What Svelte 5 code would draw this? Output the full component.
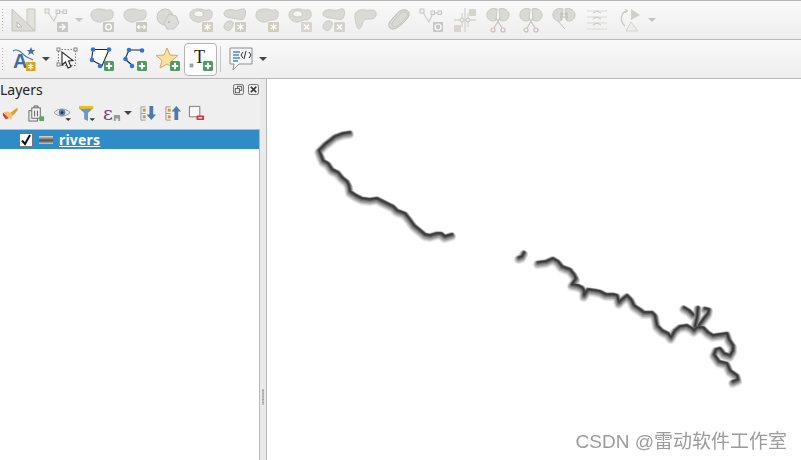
<script>
  const river1 = [[350,133],[343,134],[335,137],[330,141],[326,144],[319,151],[321,156],[323,161],[328,164],[332,170],[338,173],[342,178],[347,182],[349,186],[350,192],[356,196],[362,199],[370,200],[377,199],[385,203],[393,207],[397,211],[405,214],[409,219],[414,226],[419,230],[425,235],[430,236],[437,234],[441,234],[445,237],[452,235]];
  const river2a = [[519,258],[522,257],[524,253]];
  const river2 = [[538,263],[546,262],[553,259],[558,262],[562,267],[570,270],[574,275],[576,279],[572,285],[578,286],[582,288],[584,291],[584,296],[588,290],[595,291],[600,292],[606,295],[613,295],[617,296],[619,303],[622,300],[627,296],[631,300],[634,306],[640,310],[644,313],[652,313],[655,316],[657,326],[662,331],[668,334],[671,338],[675,331],[680,327],[687,326],[692,329],[694,331],[697,328],[703,328],[708,333],[713,336],[720,335],[727,334],[729,340],[733,346],[733,351],[730,356],[724,354],[720,349],[716,350],[714,355],[719,362],[727,364],[730,371],[737,376],[738,380],[733,382]];
  const branch1 = [[684,308],[689,311],[693,315]];
  const branch2 = [[695,327],[697,318],[698,308]];
  const branch3 = [[699,326],[704,319],[708,314],[709,310],[705,309]];
  const rivers = [river1, river2a, river2, branch1, branch2, branch3].map((line) => line.map((p) => p.join(',')).join(' '));

  // outer halo first, dark core last
  const layers = [
    { width: 9.5, color: '#f0f0f0', dx: -0.5, dy: 1.6 },
    { width: 8.4, color: '#dcdcdc', dx: -0.4, dy: 1.3 },
    { width: 7.2, color: '#c0c0c0', dx: -0.3, dy: 1 },
    { width: 5.8, color: '#9c9c9c', dx: -0.2, dy: 0.6 },
    { width: 4.2, color: '#757575', dx: 0, dy: 0 },
    { width: 2.6, color: '#505050', dx: 0, dy: -0.5 },
    { width: 1.2, color: '#383838', dx: 0, dy: -0.8 }
  ];

  const blobA = 'M1 7c0-5 4-6 9-6s6 2 9 1 5 2 4 6-4 4-7 4-4 3-8 2-7-3-7-7z';
  const holed = 'M1 7c0-5 4-6 9-6s6 2 9 1 5 2 4 6-4 4-7 4-4 3-8 2-7-3-7-7zM5 5c-1 2 2 4 5 4s5-1 4-4-8-3-9 0z';
  const twoTop = 'M2 6c0-4 5-5 9-4s5 0 9-1 4 3 3 7-4 4-8 3-13-1-13-5z';
  const twoBot = 'M2 19c0-3 3-7 7-6s2 5 0 8-7 1-7-2z';
</script>

{#snippet blob(d)}
  <path {d} fill="#d9d9d6" stroke="#cacac7" fill-rule="evenodd" />
{/snippet}

{#snippet badge(kind, tint = '#c9c9c4')}
  <rect x="13" y="14" width="11" height="10" rx="1" fill={tint} />
  {#if kind === 'x'}
    <path d="M16 16.500l5 5m0-5l-5 5" stroke="#fff" stroke-width="1.700" />
  {:else if kind === 'gear'}
    <path d="M18.500 15.500v7m-3-5.500l6 4m0-4l-6 4" stroke="#fff" stroke-width="1.100" />
    <circle cx="18.500" cy="19" r="1.500" fill="#fff" />
  {:else if kind === 'rotate'}
    <circle cx="18.500" cy="19" r="2.800" fill="none" stroke="#fff" stroke-width="1.300" />
  {:else if kind === 'resize'}
    <path d="M15 19h7m-5.500-2l-2 2 2 2m4-4l2 2-2 2" fill="none" stroke="#fff" stroke-width="1.200" />
  {/if}
{/snippet}

{#snippet scissors()}
  <path d="M11 1C5-1 0 3 1 8s6 6 9 4zM13 1c5-2 11 2 10 7s-6 6-9 4z" fill="#d9d9d6" stroke="#c8c8c5" />
  <path d="M10 10l6 10M14 10l-6 10" stroke="#c4c4c1" stroke-width="1.300" fill="none" />
  <circle cx="7" cy="22" r="2" fill="none" stroke="#cbbcbc" stroke-width="1.200" />
  <circle cx="17" cy="22" r="2" fill="none" stroke="#cbbcbc" stroke-width="1.200" />
{/snippet}

{#snippet plus()}
  <rect x="14" y="14" width="10" height="10" rx="1.500" fill="#4f9a62" />
  <path d="M19 15.800v6.400M15.800 19h6.400" stroke="#fff" stroke-width="2" />
{/snippet}

{#snippet arrow()}
  <span class="arrow"></span>
{/snippet}

<div class="window">
  <div class="toolbar first">
    <span class="handle"></span>
    <span class="btn"><svg viewBox="0 0 24 24">
      <path d="M0 1l23 22H0z" fill="#dcdbd6" stroke="#c5c3bc" />
      <path d="M5 14l5 5H5z" fill="#f5f5f3" stroke="#bcbab3" />
      <path d="M15 1h8v22l-8-8z" fill="#e3e2dd" stroke="#c9c7c0" />
    </svg></span>
    <span class="btn"><svg viewBox="0 0 24 24">
      <path d="M2 3l7 10 4-9h7" fill="none" stroke="#cfcfcb" stroke-width="1.300" />
      <rect x="0" y="1" width="4" height="4" fill="#eee" stroke="#c6c6c2" />
      <rect x="11" y="2" width="3.500" height="3.500" fill="#eee" stroke="#c6c6c2" />
      <rect x="18" y="2" width="3.500" height="3.500" fill="#eee" stroke="#c6c6c2" />
      <rect x="12" y="14" width="11" height="10" rx="1" fill="#c6c6c2" />
      <path d="M14 19h5m-2-3l3 3-3 3" fill="none" stroke="#fff" stroke-width="1.500" />
    </svg></span>
    <span class="caret-btn">{@render arrow()}</span>
    <span class="btn"><svg viewBox="0 0 24 24">{@render blob(blobA)}{@render badge('rotate')}</svg></span>
    <span class="btn"><svg viewBox="0 0 24 24">{@render blob(blobA)}{@render badge('resize')}</svg></span>
    <span class="btn"><svg viewBox="0 0 24 24">
      <circle cx="9" cy="9" r="8" fill="#d9d9d6" stroke="#c8c8c5" />
      <path d="M13 6l7 2 3 7-5 6h-7l-3-6z" fill="#dcdcd9" stroke="#c4c4c1" />
      <circle cx="13" cy="14" r="1" fill="#b5b5b2" />
    </svg></span>
    <span class="btn"><svg viewBox="0 0 24 24">{@render blob(holed)}{@render badge('gear', '#cfcdc2')}</svg></span>
    <span class="btn"><svg viewBox="0 0 24 24">
      {@render blob(twoTop)}
      {@render blob(twoBot)}
      {@render badge('gear', '#cfcdc2')}
    </svg></span>
    <span class="btn"><svg viewBox="0 0 24 24">{@render blob(blobA)}{@render badge('gear', '#cfcdc2')}</svg></span>
    <span class="btn"><svg viewBox="0 0 24 24">{@render blob(holed)}{@render badge('x', '#d8d2d0')}</svg></span>
    <span class="btn"><svg viewBox="0 0 24 24">
      {@render blob(twoTop)}
      {@render blob(twoBot)}
      {@render badge('x', '#d4d2cf')}
    </svg></span>
    <span class="btn"><svg viewBox="0 0 24 24">
      {@render blob('M1 8c0-5 5-7 10-6s10-2 11 3-3 6-7 6-5 1-6 3-2 7-4 7-4-8-4-13z')}
    </svg></span>
    <span class="btn"><svg viewBox="0 0 24 24">
      <path d="M3 20c-3-3 0-7 3-10s5-7 9-8 8 1 7 5-4 6-7 9-9 7-12 4z" fill="#d9d9d6" stroke="#bdbdb9" />
      <path d="M6 18c-2-2 0-5 3-8s5-6 8-6 4 2 3 4-4 5-6 7-6 5-8 3z" fill="none" stroke="#c6c6c2" />
    </svg></span>
    <span class="btn"><svg viewBox="0 0 24 24">
      <path d="M2 3l7 11 4-9h7" fill="none" stroke="#cfcfcb" stroke-width="1.300" />
      <rect x="0" y="1" width="4" height="4" fill="#eee" stroke="#c6c6c2" />
      <rect x="11" y="3" width="3.500" height="3.500" fill="#eee" stroke="#c6c6c2" />
      <rect x="18" y="3" width="3.500" height="3.500" fill="#eee" stroke="#c6c6c2" />
      <rect x="13" y="14" width="10" height="10" rx="1" fill="#c6c6c2" />
      <circle cx="18" cy="19" r="3" fill="none" stroke="#fff" stroke-width="1.200" />
    </svg></span>
    <span class="btn"><svg viewBox="0 0 24 24">
      <path d="M12 0v24M1 12h22M9 5v14M15 5v14" fill="none" stroke="#d5d5d2" stroke-width="1.300" />
      <circle cx="9" cy="12" r="2" fill="#eee" stroke="#c6c6c2" />
      <circle cx="15" cy="12" r="2" fill="#eee" stroke="#c6c6c2" />
      <rect x="16" y="1" width="7" height="7" rx="1" fill="#d4d4c8" />
      <rect x="1" y="17" width="7" height="7" rx="1" fill="#d8d4d2" />
    </svg></span>
    <span class="btn"><svg viewBox="0 0 24 24">{@render scissors()}</svg></span>
    <span class="btn"><svg viewBox="0 0 24 24">{@render scissors()}</svg></span>
    <span class="btn"><svg viewBox="0 0 24 24">
      <path d="M11 1C5-1 0 3 1 8s6 6 9 4zM13 1c5-2 11 2 10 7s-6 6-9 4z" fill="#d9d9d6" stroke="#c8c8c5" />
      <path d="M9 4v8m6-8v8M8 6h8M8 9h8M6 13l7 8" stroke="#bfbfbc" fill="none" />
    </svg></span>
    <span class="btn"><svg viewBox="0 0 24 24">
      <path d="M2 3h20M2 9h20M2 15h20M2 21h20" stroke="#dadad7" fill="none" />
      <path d="M8 5l4-2 4 2M8 11l4-2 4 2M8 17l4-2 4 2" stroke="#c6c6c3" fill="none" />
    </svg></span>
    <span class="btn"><svg viewBox="0 0 24 24">
      <path d="M13 1v11l9-5z" fill="#cfcfcc" />
      <path d="M13 14l-5 9h12z" fill="#ededeb" stroke="#d4d4d1" />
      <path d="M9 3c-6 1-8 10-2 15" fill="none" stroke="#cacac7" stroke-width="1.300" />
      <path d="M7 1l3 2-3 2" fill="none" stroke="#cacac7" />
    </svg></span>
    <span class="caret-btn">{@render arrow()}</span>
  </div>

  <div class="toolbar second">
    <span class="handle"></span>
    <span class="btn"><svg viewBox="0 0 24 24">
      <path d="M1 4c4-3 8 1 11 4s6 3 9 5" fill="none" stroke="#4b77a8" stroke-width="1.100" />
      <text class="glyph" x="1" y="21">A</text>
      <path d="M19 0l1.300 3h3l-2.400 2 1 3-2.900-1.800L16.100 8l1-3-2.400-2h3z" fill="#47719f" />
      <rect x="14" y="15" width="9.500" height="9" fill="#d9a516" />
      <path d="M18.700 16.500v6m-2.600-4.500l5.200 3m0-3l-5.200 3" stroke="#fff" stroke-width="1.200" />
    </svg></span>
    <span class="caret-btn">{@render arrow()}</span>
    <span class="btn"><svg viewBox="0 0 24 24">
      <rect x="1.500" y="2.500" width="17" height="16" fill="none" stroke="#777" stroke-dasharray="1.500 1.500" />
      <rect x="0" y="1" width="3" height="3" fill="#fff" stroke="#666" stroke-width="0.800" />
      <rect x="17" y="1" width="3" height="3" fill="#fff" stroke="#666" stroke-width="0.800" />
      <rect x="0" y="16" width="3" height="3" fill="#fff" stroke="#666" stroke-width="0.800" />
      <path d="M5 5l0 13 3.500-3 2.500 6 3-1.300-2.500-5.700 4.500-.5z" fill="#fff" stroke="#222" stroke-width="1.100" />
    </svg></span>
    <span class="btn"><svg viewBox="0 0 24 24">
      <path d="M3 2.500h16L12 19l-2-1.500L1.500 13z" fill="#fff" stroke="#222" stroke-width="1.100" />
      <circle cx="3" cy="2.500" r="2.300" fill="#2f74e0" />
      <circle cx="19" cy="2.500" r="2.300" fill="#2f74e0" />
      <circle cx="2" cy="13" r="2.300" fill="#2f74e0" />
      <circle cx="10" cy="19" r="2.300" fill="#2f74e0" />
      {@render plus()}
    </svg></span>
    <span class="btn"><svg viewBox="0 0 24 24">
      <path d="M19 3H6L2 12l8 7" fill="none" stroke="#222" stroke-width="1.100" />
      <circle cx="19" cy="3.500" r="2.300" fill="#2f74e0" />
      <circle cx="6" cy="3" r="2.300" fill="#2f74e0" />
      <circle cx="2.500" cy="12" r="2.300" fill="#2f74e0" />
      <circle cx="9" cy="19" r="2.300" fill="#2f74e0" />
      {@render plus()}
    </svg></span>
    <span class="btn"><svg viewBox="0 0 24 24">
      <path d="M11 1l3 7 8 .5-6 5 2 7.500-7-4-7 4 2-7.500-6-5 8-.5z" fill="#fbe39d" stroke="#d9a86a" />
      {@render plus()}
    </svg></span>
    <span class="btn active"><svg viewBox="0 0 24 24">
      <text class="serif" x="5" y="16">T</text>
      <rect x="1" y="17" width="3" height="3" fill="#aaa" stroke="#888" stroke-width="0.600" />
      {@render plus()}
    </svg></span>
    <span class="divider"></span>
    <span class="btn"><svg viewBox="0 0 24 24">
      <path d="M1 1h22v16H10l-6 6 1-6H1z" fill="#f4f6f8" stroke="#8a8f94" />
      <path d="M4 5h7M4 8h6M4 11h7M4 14h5" stroke="#4a86c8" stroke-width="1.300" />
      <path d="M14 5l-2 3 2 3m6-6l2 3-2 3m-3-7l-2 8" fill="none" stroke="#333" />
    </svg></span>
    <span class="caret-btn">{@render arrow()}</span>
  </div>

  <div class="main">
    <aside class="panel">
      <div class="panel-title">
        <span class="title">Layers</span>
        <span class="title-btns">
          <svg viewBox="0 0 12 12"><rect x="0.500" y="0.500" width="11" height="11" rx="2" fill="none" stroke="#666" /><rect x="5" y="2.500" width="4.500" height="4.500" fill="none" stroke="#555" /><rect x="2.500" y="5" width="4.500" height="4.500" fill="#efefef" stroke="#555" /></svg>
          <svg viewBox="0 0 12 12"><rect x="0.500" y="0.500" width="11" height="11" rx="2" fill="none" stroke="#666" /><path d="M3 3l6 6m0-6l-6 6" stroke="#333" stroke-width="1.800" /></svg>
        </span>
      </div>
      <div class="panel-tools">
        <svg class="t1" viewBox="0 0 18 18">
          <path d="M8 9l8-6 1 2-6 7z" fill="#e0a030" />
          <path d="M2 8c3-2 6-1 9 2l-1 5c-3 0-6-3-8-7z" fill="#f2c46b" />
          <path d="M1 8l6 6-3 1-3-4z" fill="#d33" />
        </svg>
        <svg class="t2" viewBox="0 0 18 18">
          <rect x="1" y="6" width="9" height="11" fill="#eee" stroke="#666" />
          <rect x="4" y="3" width="9" height="11" fill="#f4f4f4" stroke="#666" />
          <path d="M6.500 3V1h4v2M7 6v6m3-6v6" stroke="#555" fill="none" />
          <rect x="12" y="12" width="5" height="5" fill="#5aa36c" />
        </svg>
        <svg class="t3" viewBox="0 0 20 18">
          <path d="M1 8c5-5 12-5 17 0-5 5-12 5-17 0z" fill="#e8e8e8" stroke="#999" />
          <circle cx="9.500" cy="8" r="3.500" fill="#5b7fa8" />
          <circle cx="9.500" cy="8" r="1.400" fill="#20344d" />
          <path d="M13 14h6l-3 3z" fill="#333" />
        </svg>
        <svg class="t4" viewBox="0 0 18 18">
          <path d="M0 1h15v2.500l-5.500 5v8.500l-4-2V8.500L0 3.500z" fill="#7096bd" />
          <path d="M0 1h15v3H0z" fill="#e8c020" />
          <path d="M11 14h6l-3 3z" fill="#333" />
        </svg>
        <span class="t5"><span class="epsilon">ε</span><svg viewBox="0 0 9 9"><path d="M1 1h7v7H6V5H3v3H1z" fill="#999" /></svg></span>
        <span class="t6">{@render arrow()}</span>
        <svg class="t7" viewBox="0 0 18 18">
          <path d="M1 2v14h5M1 2h5M1 9h5" fill="none" stroke="#999" />
          <rect x="3" y="4" width="3" height="3" fill="#e98b17" /><rect x="3" y="11" width="3" height="3" fill="#e98b17" />
          <path d="M10 1h4v9h3l-5 6-5-6h3z" fill="#4d7aa8" />
        </svg>
        <svg class="t8" viewBox="0 0 18 18">
          <path d="M1 2v14h5M1 2h5M1 9h5" fill="none" stroke="#999" />
          <rect x="3" y="4" width="3" height="3" fill="#e98b17" /><rect x="3" y="11" width="3" height="3" fill="#e98b17" />
          <path d="M10 16h4V7h3l-5-6-5 6h3z" fill="#4d7aa8" />
        </svg>
        <svg class="t9" viewBox="0 0 18 18">
          <path d="M1.500 1.500h11v11h-11z" fill="#f6f6f6" stroke="#777" />
          <rect x="9" y="11" width="8" height="5" rx="1" fill="#d8343a" />
          <path d="M11 13.500h4" stroke="#fff" stroke-width="1.400" />
        </svg>
      </div>
      <div class="tree">
        <div class="row">
          <span class="check"><svg viewBox="0 0 12 12"><path d="M2 6.500l3 3.500 5-9" fill="none" stroke="#111" stroke-width="2" /></svg></span>
          <span class="legend"></span>
          <span class="name">rivers</span>
        </div>
      </div>
    </aside>

    <div class="splitter"><span class="grip"></span></div>

    <div class="canvas">
      <svg viewBox="267 79 534 381">
        <defs>
          <filter id="soft" x="-5%" y="-5%" width="110%" height="110%">
            <feGaussianBlur stdDeviation="0.7" />
          </filter>
        </defs>
        <g filter="url(#soft)">
          {#each layers as l}
            <g transform="translate({l.dx} {l.dy})">
              {#each rivers as points}
                <polyline {points} fill="none" stroke={l.color} stroke-width={l.width} stroke-linecap="round" stroke-linejoin="round" />
              {/each}
            </g>
          {/each}
        </g>
      </svg>
    </div>
  </div>

  <span class="watermark">CSDN @雷动软件工作室</span>
</div>

<style>
  :global(body) {
    margin: 0;
  }

  .window {
    position: relative;
    display: flex;
    flex-direction: column;
    width: 801px;
    height: 460px;
    overflow: hidden;
    background: #efefef;
    font-family: "Noto Sans", "Liberation Sans", sans-serif;
  }

  .toolbar {
    display: flex;
    flex: none;
    align-items: center;
    box-sizing: border-box;
    background: linear-gradient(#f9f9f9, #eeeeee);
    border-bottom: 1px solid #b9b9b9;
  }

  .first {
    height: 40px;
    border-top: 1px solid #b5b5b5;
  }

  .second {
    height: 39px;
  }

  .handle {
    width: 3px;
    height: 24px;
    margin: 0 3px 0 1px;
    background-image: radial-gradient(#b0b0b0 0.7px, transparent 0.8px);
    background-size: 3px 3px;
  }

  .btn {
    display: flex;
    flex: none;
    align-items: center;
    justify-content: center;
    box-sizing: border-box;
    width: 33px;
    height: 33px;
  }

  .btn svg {
    width: 24px;
    height: 24px;
    overflow: visible;
  }

  .active {
    border: 1px solid #b4b4b4;
    border-radius: 4px;
    background: #fdfdfd;
  }

  .caret-btn {
    display: flex;
    flex: none;
    justify-content: center;
    width: 12px;
  }

  .first .caret-btn .arrow {
    border-top-color: #c4c4c4;
  }

  .arrow {
    display: block;
    width: 0;
    height: 0;
    border-left: 4px solid transparent;
    border-right: 4px solid transparent;
    border-top: 4px solid #444;
  }

  .divider {
    width: 1px;
    height: 26px;
    margin: 0 3px;
    background: #c8c8c8;
  }

  .glyph {
    font: bold 20px "Liberation Sans", sans-serif;
    fill: #3c6da3;
  }

  .serif {
    font: 18px "Liberation Serif", serif;
    fill: #222;
  }

  .main {
    display: flex;
    flex: 1;
    min-height: 0;
  }

  .panel {
    display: flex;
    flex: none;
    flex-direction: column;
    width: 260px;
  }

  .panel-title {
    display: flex;
    flex: none;
    align-items: center;
    justify-content: space-between;
    height: 20px;
  }

  .title {
    font-size: 14px;
    color: #222;
  }

  .title-btns {
    display: flex;
    gap: 4px;
    margin-right: 1px;
  }

  .title-btns svg {
    display: block;
    width: 11px;
    height: 11px;
  }

  .panel-tools {
    position: relative;
    display: flex;
    flex: none;
    align-items: center;
    box-sizing: border-box;
    height: 30px;
    padding: 0 0 2px 2px;
  }

  .panel-tools svg {
    display: block;
    flex: none;
    width: 17px;
    height: 17px;
  }

  .t1 { margin-right: 9px; }
  .t2 { margin-right: 8px; }
  .panel-tools .t3 { width: 19px; margin-right: 7px; }
  .t4 { margin-right: 7px; }

  .t5 {
    display: flex;
    align-items: flex-end;
    width: 20px;
    height: 17px;
    margin-right: 1px;
  }

  .epsilon {
    font: 19px/17px "DejaVu Serif", serif;
    color: #6b3f78;
  }

  .panel-tools .t5 svg {
    width: 8px;
    height: 8px;
  }

  .t6 {
    width: 11px;
    margin-right: 5px;
  }

  .t7 { margin-right: 8px; }
  .t8 { margin-right: 6px; }

  .tree {
    flex: 1;
    border-right: 1px solid #b9b9b9;
    border-top: 1px solid #b9b9b9;
    background: #fff;
  }

  .row {
    display: flex;
    align-items: center;
    height: 19px;
    padding-left: 19px;
    background: #308cc6;
  }

  .check {
    box-sizing: border-box;
    display: flex;
    width: 14px;
    height: 14px;
    margin-right: 6px;
    background: #fff;
    border: 1px solid #777;
  }

  .check svg {
    width: 12px;
    height: 12px;
  }

  .legend {
    width: 14px;
    height: 8px;
    margin-right: 6px;
    background: linear-gradient(#ddd, #666 45%, #555 60%, #ccc);
  }

  .name {
    font-size: 14px;
    font-weight: 700;
    letter-spacing: 0.2px;
    color: #fff;
    text-decoration: underline;
  }

  .splitter {
    display: flex;
    flex: none;
    align-items: flex-end;
    justify-content: center;
    box-sizing: border-box;
    width: 7px;
    padding-bottom: 55px;
    border-right: 1px solid #b9b9b9;
    background: #eaeaea;
  }

  .grip {
    width: 2px;
    height: 16px;
    background-image: radial-gradient(#a5a5a5 0.8px, transparent 0.9px);
    background-size: 2px 3px;
  }

  .canvas {
    flex: 1;
    min-width: 0;
    background: #fff;
  }

  .canvas svg {
    display: block;
    width: 534px;
    height: 381px;
  }

  .watermark {
    position: absolute;
    right: 14px;
    bottom: 7px;
    font: 19px "Liberation Sans", "Noto Sans CJK SC", sans-serif;
    color: #8a8a8a;
    opacity: 0.85;
  }
</style>
